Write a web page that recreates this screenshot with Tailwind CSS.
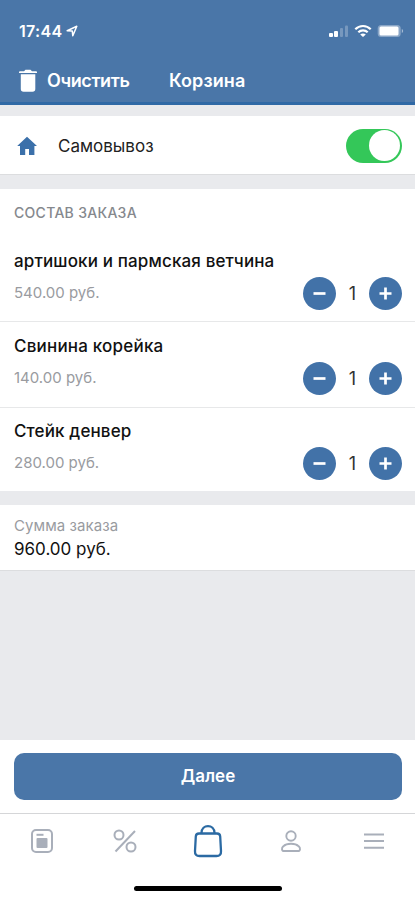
<!DOCTYPE html>
<html lang="ru">
<head>
<meta charset="utf-8">
<title>Корзина</title>
<script src="https://cdn.jsdelivr.net/npm/@tailwindcss/browser@4"></script>
</head>
<body class="bg-[#e9eaed]">
<div class="flex h-[900px] w-[415px] flex-col overflow-hidden bg-[#e9eaed] font-['Inter','Liberation_Sans',sans-serif] text-[#111] whitespace-nowrap">
  <header class="flex h-[105px] shrink-0 flex-col border-b-[3px] border-[#3069a5] bg-[#4a76a8] text-white">
    <div class="flex h-[58px] items-center pt-[4px] pr-[11px] pl-[19px]">
      <span class="text-[16px] leading-5 font-semibold tracking-[0.3px]">17:44</span>
      <svg class="ml-[4px]" width="12" height="12" viewBox="0 0 12 12" fill="none" stroke="#fff" stroke-width="1.5" stroke-linejoin="round"><path d="M1.2 5.8 10.8 1.2 6.8 10.8 6.3 6.1Z"/></svg>
      <div class="ml-auto flex items-center">
        <svg width="20" height="14" viewBox="0 0 20 14" fill="#fff"><rect x="0" y="9" width="4" height="4" rx="1"/><rect x="5" y="7" width="4" height="6" rx="1"/><rect x="11" y="4" width="3" height="9" rx="1" opacity=".25"/><rect x="16" y="1.5" width="3" height="11.500" rx="1" opacity=".25"/></svg>
        <svg class="ml-[5px]" width="18" height="14" viewBox="0 0 18 14" fill="none" stroke="#fff" stroke-width="2.200"><path d="M1.300 5.300C5.600.900 12.400.900 16.700 5.300M4.300 8.300C7 5.700 11 5.700 13.700 8.300"/><path d="M9 13 6.200 10.500C7.800 9.100 10.200 9.100 11.800 10.500Z" fill="#fff" stroke="none"/></svg>
        <svg class="ml-[5px]" width="27" height="14" viewBox="0 0 27 14"><rect x=".7" y="1" width="23" height="12" rx="3.500" fill="#fff" fill-opacity=".35"/><rect x="2.500" y="2.500" width="19" height="9" rx="1.500" fill="#fff"/><path d="M24.800 5v4c1.800-.6 1.800-3.400 0-4" fill="#fff" fill-opacity=".5"/></svg>
      </div>
    </div>
    <div class="flex h-[44px] items-center pt-px pl-[19px] text-[18px] leading-6 font-semibold">
      <svg width="19" height="24" viewBox="0 0 19 24" fill="#fff"><path d="M1 2.200h4L6.500.800h5L13 2.200h4q1 0 1 1V4H0v-.8q0-1 1-1ZM1.800 5.300h14.500V20q0 2.800-2.800 2.800H4.600Q1.800 22.800 1.800 20Z"/></svg>
      <span class="ml-[9px] w-[122px] tracking-[-0.4px]">Очистить</span>
      <span class="tracking-[0.1px]">Корзина</span>
    </div>
  </header>

  <section class="mt-[11px] flex h-[59px] shrink-0 items-center border-b border-[#dcdddf] bg-white pt-px pr-[13px] pl-[17px]">
    <svg width="20" height="20" viewBox="0 0 20 20" fill="#3b70aa"><path d="M10 .8 20 10h-2.600v9H12v-6H8.200v6H3v-9H.2Z"/></svg>
    <span class="ml-[21px] pt-px text-[17px] leading-6 text-[#222]">Самовывоз</span>
    <div class="ml-auto flex h-[34px] w-[56px] items-center justify-end rounded-full bg-[#34c759] pr-[2px]"><div class="size-[31px] rounded-full bg-white"></div></div>
  </section>

  <section class="mt-[14px] h-[302px] shrink-0 bg-white">
    <h2 class="h-[48px] pt-[14px] pl-[14px] text-[14px] leading-5 font-medium tracking-[0.3px] text-[#85888d]">СОСТАВ ЗАКАЗА</h2>
    <div class="h-[85px] border-b border-[#e7e8e9] pt-[12px] pr-[13px] pl-[14px]">
      <div class="text-[17px] leading-6 font-medium tracking-[0.14px]"><span>артишоки и пармская ветчина</span></div>
      <div class="mt-[3px] flex h-[34px] items-center justify-between">
        <span class="text-[15px] text-[#999b9f]">540.00 руб.</span>
        <div class="flex w-[99px] items-center justify-between">
          <svg width="33" height="33" viewBox="0 0 33 33"><circle cx="16.500" cy="16.500" r="16.500" fill="#4272a8"/><path d="M10.500 16.500h12" stroke="#fff" stroke-width="2.700"/></svg>
          <span class="text-[18px] text-[#333]">1</span>
          <svg width="33" height="33" viewBox="0 0 33 33"><circle cx="16.500" cy="16.500" r="16.500" fill="#4272a8"/><path d="M10.500 16.500h12M16.500 10.500v12" stroke="#fff" stroke-width="2.700"/></svg>
        </div>
      </div>
    </div>
    <div class="h-[86px] border-b border-[#e7e8e9] pt-[12px] pr-[13px] pl-[14px]">
      <div class="text-[17px] leading-6 font-medium tracking-[0.2px]"><span>Свинина корейка</span></div>
      <div class="mt-[3px] flex h-[34px] items-center justify-between">
        <span class="text-[15px] text-[#999b9f]">140.00 руб.</span>
        <div class="flex w-[99px] items-center justify-between">
          <svg width="33" height="33" viewBox="0 0 33 33"><circle cx="16.500" cy="16.500" r="16.500" fill="#4272a8"/><path d="M10.500 16.500h12" stroke="#fff" stroke-width="2.700"/></svg>
          <span class="text-[18px] text-[#333]">1</span>
          <svg width="33" height="33" viewBox="0 0 33 33"><circle cx="16.500" cy="16.500" r="16.500" fill="#4272a8"/><path d="M10.500 16.500h12M16.500 10.500v12" stroke="#fff" stroke-width="2.700"/></svg>
        </div>
      </div>
    </div>
    <div class="h-[83px] pt-[11px] pr-[13px] pl-[14px]">
      <div class="text-[17px] leading-6 font-medium tracking-[0.14px]"><span>Стейк денвер</span></div>
      <div class="mt-[3px] flex h-[34px] items-center justify-between">
        <span class="text-[15px] text-[#999b9f]">280.00 руб.</span>
        <div class="flex w-[99px] items-center justify-between">
          <svg width="33" height="33" viewBox="0 0 33 33"><circle cx="16.500" cy="16.500" r="16.500" fill="#4272a8"/><path d="M10.500 16.500h12" stroke="#fff" stroke-width="2.700"/></svg>
          <span class="text-[18px] text-[#333]">1</span>
          <svg width="33" height="33" viewBox="0 0 33 33"><circle cx="16.500" cy="16.500" r="16.500" fill="#4272a8"/><path d="M10.500 16.500h12M16.500 10.500v12" stroke="#fff" stroke-width="2.700"/></svg>
        </div>
      </div>
    </div>
  </section>

  <section class="mt-[14px] h-[66px] shrink-0 border-b border-[#dcdddf] bg-white pt-[11px] pl-[14px]">
    <div class="text-[15px] leading-5 tracking-[0.07px] text-[#999b9f]"><span>Сумма заказа</span></div>
    <div class="mt-px text-[17px] leading-6"><span>960.00 руб.</span></div>
  </section>

  <footer class="mt-auto flex h-[160px] shrink-0 flex-col bg-white">
    <div class="h-[74px] border-b-[1.500px] border-[#d5d6d8] px-[14px] pt-[13px] pr-[13px]">
      <button class="h-[47px] w-full rounded-[10px] bg-[#4a76a8] text-[17px] font-semibold text-white">Далее</button>
    </div>
    <nav class="grid h-[53px] grid-cols-5 place-items-center pl-[1px]">
      <svg width="24" height="26" viewBox="0 0 24 26" fill="none"><rect x="2" y="2" width="20" height="22" rx="4" stroke="#a9afba" stroke-width="2"/><path d="M6.500 6.800h7" stroke="#a9afba" stroke-width="2"/><rect x="6.500" y="10" width="11" height="10" rx="1" fill="#a9afba"/></svg>
      <svg width="26" height="26" viewBox="0 0 26 26" fill="none" stroke="#a9afba" stroke-width="2"><circle cx="7" cy="7" r="4.500"/><circle cx="19" cy="19" r="4.500"/><path d="M3.500 23.500 23 3"/></svg>
      <svg width="32" height="36" viewBox="0 0 32 36" fill="none" stroke="#2b6aa3" stroke-width="2.300"><path d="M7 10.500h18q3 0 3.200 3l.8 14.500q.3 5-4.500 5h-17q-4.800 0-4.500-5l.8-14.500q.2-3 3.200-3Z"/><path d="M9.500 10c0-9.300 13-9.300 13 0"/></svg>
      <svg width="22" height="24" viewBox="0 0 22 24" fill="none" stroke="#a9afba" stroke-width="1.900"><circle cx="11" cy="7" r="4.700"/><path d="M4.300 22h13.400c3 0 2.800-3 1-4.700-3.400-3.400-12-3.400-15.400 0C1.500 19 1.300 22 4.300 22Z"/></svg>
      <svg width="22" height="20" viewBox="0 0 22 20" fill="none" stroke="#a9afba" stroke-width="2"><path d="M1 3.500h20M1 10h20M1 16.700h20"/></svg>
    </nav>
    <div class="mx-auto mt-[19px] h-[5px] w-[148px] rounded-full bg-black"></div>
  </footer>
</div>
</body>
</html>
